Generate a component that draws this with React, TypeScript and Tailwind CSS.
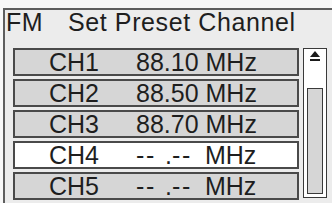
import React from 'react';

interface Preset {
  ch: string;
  freq: string | null;
  selected?: boolean;
}

const presets: Preset[] = [
  { ch: 'CH1', freq: '88.10' },
  { ch: 'CH2', freq: '88.50' },
  { ch: 'CH3', freq: '88.70' },
  { ch: 'CH4', freq: null, selected: true },
  { ch: 'CH5', freq: null },
];

function Dashes() {
  return (
    <>
      <span className="inline-block w-[10px]">-</span>
      <span className="inline-block w-[10px]">-</span>
    </>
  );
}

function Freq({ value }: { value: string | null }) {
  if (value) return <span>{value} MHz</span>;
  // empty slot: dashes take the place of the digits
  return (
    <span>
      <span className="inline-block w-[28px]">
        <Dashes />
      </span>
      <span className="inline-block w-[8px] pl-[1px]">.</span>
      <span className="inline-block w-[26px]">
        <Dashes />
      </span>{' '}
      MHz
    </span>
  );
}

function ScrollBar() {
  return (
    <div className="w-[24px] h-[150px] border border-[#3a3a3a] bg-white flex flex-col items-center shrink-0">
      <svg width="12" height="11" viewBox="0 0 12 11" className="mt-[2px]">
        <polygon points="6,0 11,6 1,6" fill="#1a1a1a" />
        <rect x="1" y="8" width="10" height="2" fill="#1a1a1a" />
      </svg>
      <div className="mt-[26px] w-[16px] h-[106px] border border-[#3a3a3a] bg-[#d6d6d6]" />
    </div>
  );
}

export default function App() {
  return (
    <div
      className="w-[332px] h-[203px] overflow-hidden bg-[#f8f8f8] pt-[8px] pl-[3px] text-[#1e1e1e]"
      style={{ fontFamily: '"Liberation Sans", Arial, sans-serif' }}
    >
      <div className="w-[331px] h-[230px] border-2 border-[#5e5e5e] bg-[#ececec]">
        <div className="pl-[1px] text-[25px] leading-[24px] tracking-[0.6px] whitespace-nowrap">
          <span className="inline-block w-[62px]">FM</span>Set Preset Channel
        </div>
        <div className="flex gap-[4px] ml-[8px] mt-[14px]">
          <div className="flex flex-col gap-[3px] w-[286px]">
            {presets.map((p) => (
              <div
                key={p.ch}
                className={`h-[28px] border-2 border-[#4a4a4a] pl-[34px] text-[25px] leading-[24px] whitespace-nowrap ${
                  p.selected ? 'bg-white' : 'bg-[#d6d6d6]'
                }`}
              >
                <span className="inline-block w-[87px]">{p.ch}</span>
                <Freq value={p.freq} />
              </div>
            ))}
          </div>
          <ScrollBar />
        </div>
      </div>
    </div>
  );
}
